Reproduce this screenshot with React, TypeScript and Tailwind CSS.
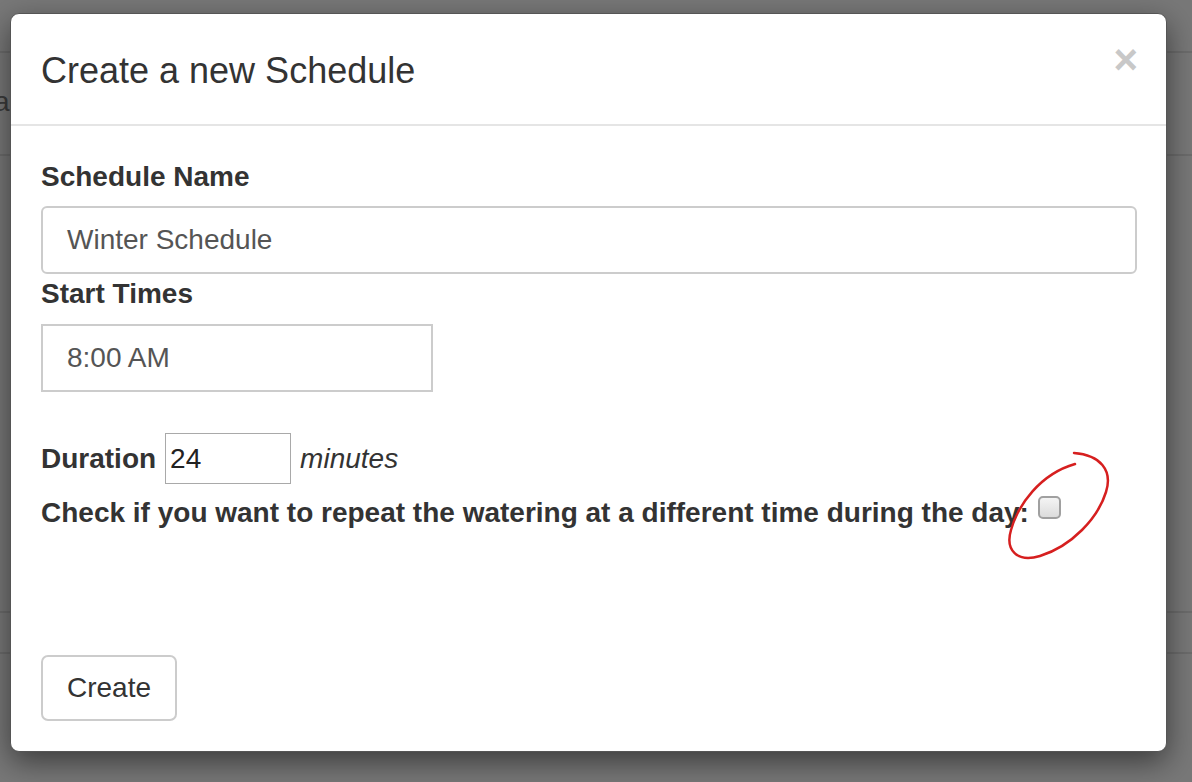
import React from "react";

export default function App() {
  const font = { fontFamily: '"Liberation Sans", Arial, Helvetica, sans-serif' };
  return (
    <div
      className="relative w-[1192px] h-[782px] overflow-hidden bg-[#787878]"
      style={font}
    >
      {/* page behind the overlay */}
      <div className="absolute left-0 right-0 top-[51px] h-[2px] bg-[#6c6c6c]" />
      <div className="absolute left-0 right-0 top-[154px] h-[2px] bg-[#6c6c6c]" />
      <div className="absolute left-0 right-0 top-[611px] h-[2px] bg-[#6c6c6c]" />
      <div className="absolute left-0 right-0 top-[652px] h-[2px] bg-[#6c6c6c]" />
      <span className="absolute left-[-6px] top-[82px] text-[28px] leading-[40px] text-[#3c3c3c]">
        a
      </span>

      {/* modal */}
      <div className="absolute left-[10px] top-[13px] w-[1157px] h-[739px] bg-white rounded-[9px] border border-[#555] shadow-[0_10px_30px_rgba(0,0,0,0.5)] flex flex-col">
        <div className="h-[112px] px-[30px] flex items-start border-b-2 border-[#e5e5e5]">
          <h4 className="flex-1 mt-[37px] text-[36px] leading-[40px] text-[#333] font-normal">
            Create a new Schedule
          </h4>
          <button className="mt-[25px] mr-[-2px] text-[42px] leading-[42px] font-bold text-[#c8c8c8]">
            ×
          </button>
        </div>

        <div className="px-[30px] pt-[31px] flex flex-col text-[28px] leading-[40px] text-[#333]">
          <label className="font-bold mb-[9px]">Schedule Name</label>
          <div className="h-[68px] w-[1096px] border-2 border-[#cccccc] rounded-[6px] px-[24px] flex items-center text-[#555]">
            Winter Schedule
          </div>
          <label className="font-bold mb-[10px]">Start Times</label>
          <div className="h-[68px] w-[392px] border-2 border-[#cccccc] px-[24px] flex items-center text-[#555]">
            8:00 AM
          </div>

          <div className="mt-[41px] h-[51px] flex items-center gap-[9px]">
            <span className="font-bold">Duration</span>
            <div className="h-[51px] w-[126px] border border-[#a9a9a9] pl-[4px] flex items-center text-[#222]">
              24
            </div>
            <span className="italic">minutes</span>
          </div>

          <div className="mt-[9px] flex items-center gap-[9px]">
            <span className="font-bold">
              Check if you want to repeat the watering at a different time during the day:
            </span>
            <span className="mt-[-12px] w-[23px] h-[23px] rounded-[5px] border-2 border-[#a0a0a0] bg-gradient-to-b from-[#f4f4f4] to-[#dcdcdc]" />
          </div>

          <div className="mt-[122px]">
            <button className="h-[66px] px-[24px] border-2 border-[#cccccc] rounded-[7px] text-[28px] leading-[40px] text-[#333] bg-white">
              Create
            </button>
          </div>
        </div>
      </div>

      {/* red annotation */}
      <svg className="absolute left-0 top-0 pointer-events-none" width="1192" height="782">
        <path
          d="M1074,453 C1100,455 1113,470 1106,492 C1098,518 1072,546 1040,556 C1017,563 1005,550 1011,530 C1018,505 1040,474 1075,464"
          fill="none"
          stroke="#d61f1f"
          strokeWidth="2.5"
          strokeLinecap="round"
        />
      </svg>
    </div>
  );
}
